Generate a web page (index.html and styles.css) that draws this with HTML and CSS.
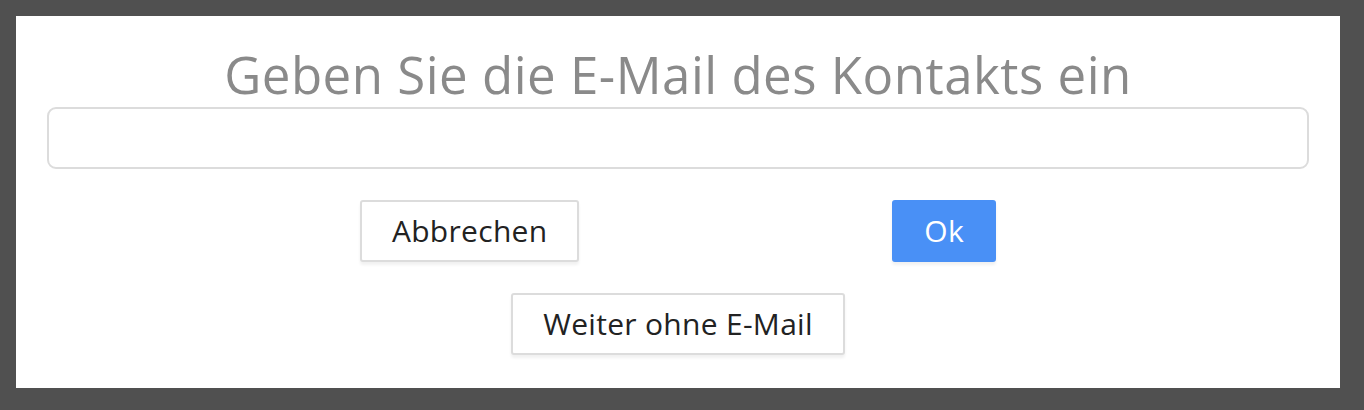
FILE: index.html
```html
<!DOCTYPE html>
<html lang="de">
<head>
<meta charset="UTF-8">
<title>Kontakt E-Mail</title>
<link rel="stylesheet" href="styles.css">
</head>
<body>
	<div class="dialog">
		<h2 class="dialog-title">Geben Sie die E-Mail des Kontakts ein</h2>
		<input type="email" class="email-input" name="email">
		<div class="actions">
			<button class="btn">Abbrechen</button>
			<button class="btn btn-primary">Ok</button>
		</div>
		<div class="actions-single">
			<button class="btn">Weiter ohne E-Mail</button>
		</div>
	</div>
</body>
</html>
```

FILE: styles.css
```css
* {
	margin: 0;
	padding: 0;
	box-sizing: border-box;
}
body {
	background-color: #505050;
	padding: 16px 24px 22px 16px;
	font-family: "Open Sans", sans-serif;
}
.dialog {
	background-color: #fff;
	height: 372px;
	padding: 31px;
	display: flex;
	flex-direction: column;
}
.dialog-title {
	font-weight: normal;
	font-size: 51px;
	letter-spacing: 0.5px;
	line-height: 60px;
	height: 60px;
	margin-top: -3px;
	color: #8a8a8a;
	text-align: center;
	white-space: nowrap;
}
.email-input {
	width: 100%;
	height: 62px;
	margin-top: 3px;
	border: 2px solid #dcdcdc;
	border-radius: 9px;
	outline: none;
	font-family: inherit;
	font-size: 22px;
	padding: 0 16px;
}
.actions {
	display: flex;
	justify-content: space-evenly;
	margin-top: 31px;
}
.actions-single {
	display: flex;
	justify-content: center;
	margin-top: 31px;
}
.btn {
	font-family: inherit;
	font-size: 30px;
	letter-spacing: 0.3px;
	line-height: 36px;
	color: #222;
	background-color: #fff;
	border: 2px solid #dcdcdc;
	border-radius: 3px;
	padding: 11px 30px;
	box-shadow: 0 3px 3px rgba(0, 0, 0, 0.06);
	cursor: pointer;
}
.btn-primary {
	background-color: #4990f6;
	border-color: #4990f6;
	color: #fff;
}
```
